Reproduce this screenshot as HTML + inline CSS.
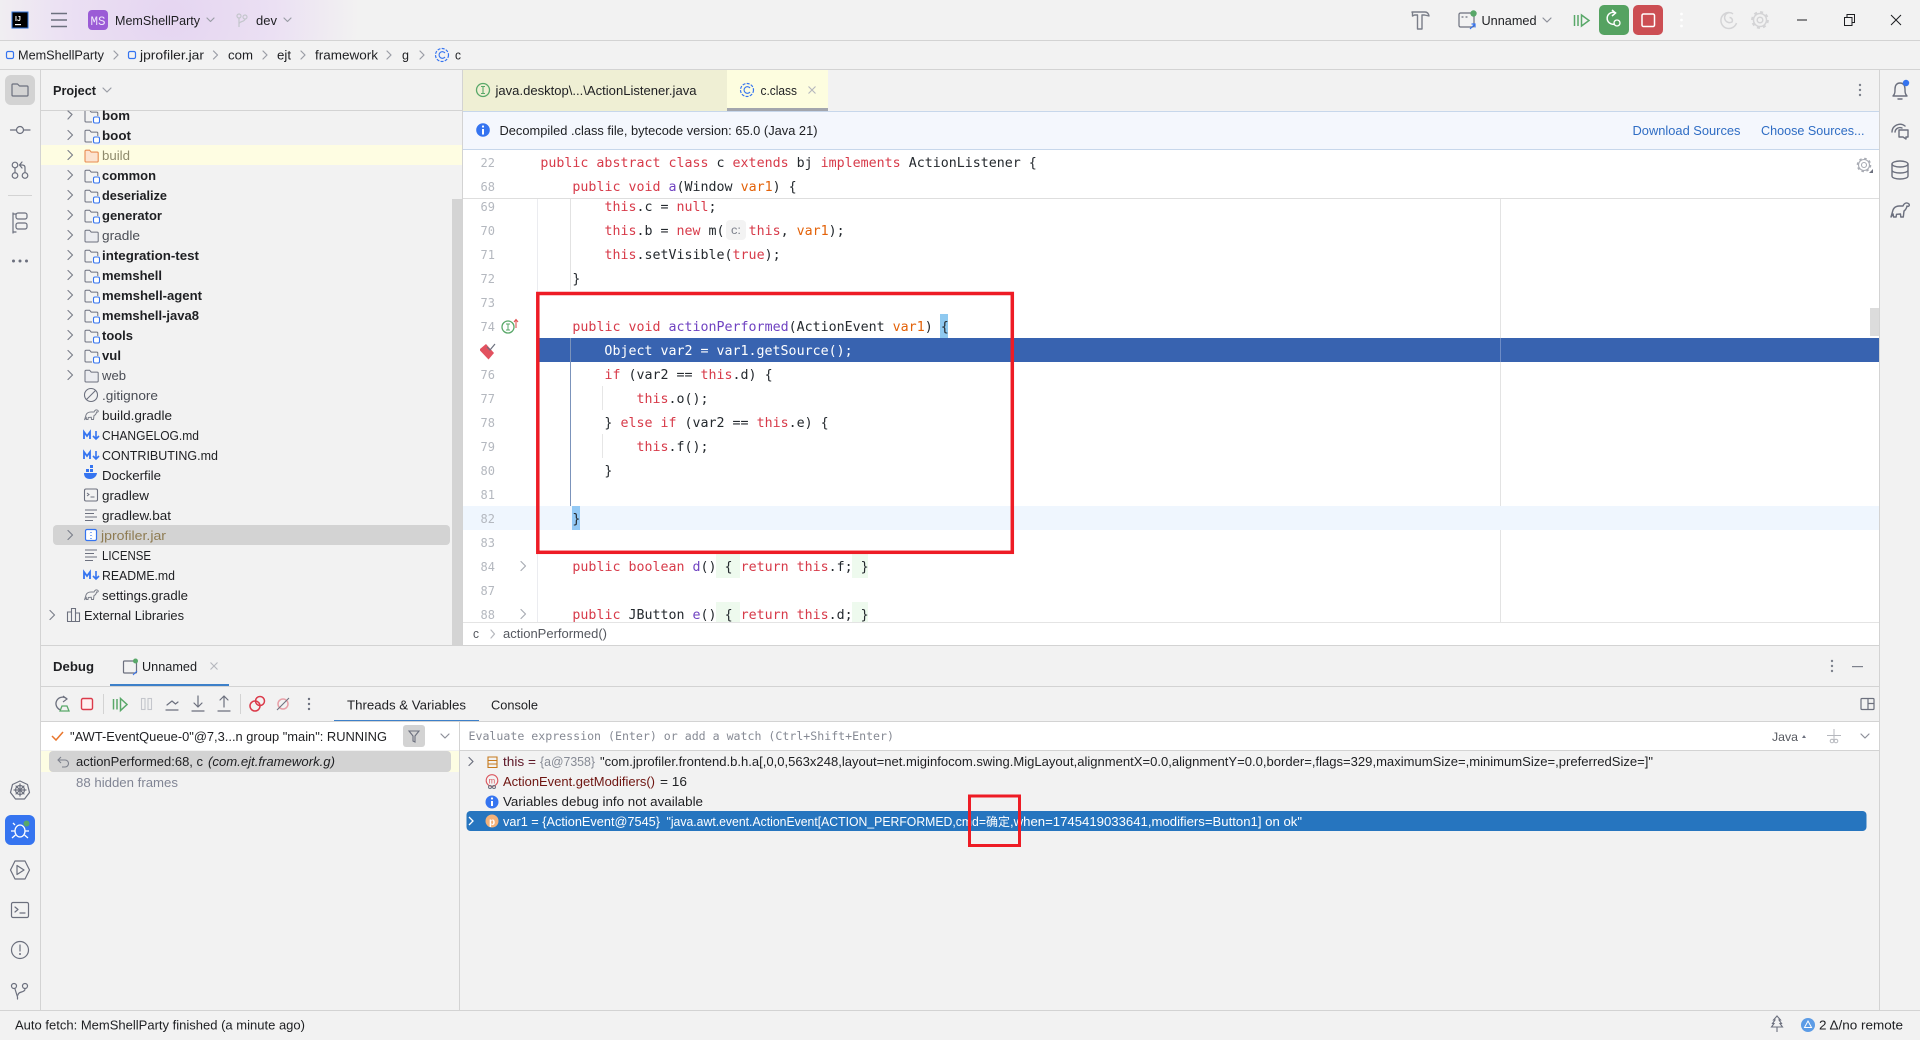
<!DOCTYPE html>
<html lang="en"><head><meta charset="utf-8"><title>MemShellParty</title>
<style>
html,body{margin:0;padding:0;width:1920px;height:1040px;overflow:hidden;background:#f2f2f2}
svg{display:block}
text{font-family:"Liberation Sans","Noto Sans CJK SC",sans-serif;font-size:13px;fill:#1e1f22;white-space:pre}
.b{font-weight:bold}
.m{font-family:"DejaVu Sans Mono","Liberation Mono",monospace;font-size:13.3px;fill:#24292e}
.n{font-family:"DejaVu Sans Mono","Liberation Mono",monospace;font-size:12px;fill:#b4b8bf}
.k{fill:#d73a49}.f{fill:#6f42c1}.p{fill:#e36209}
.i{fill:none;stroke:#6c707e;stroke-width:1.2;stroke-linecap:round;stroke-linejoin:round}
.c{fill:none;stroke:#7d818c;stroke-width:1.2;stroke-linecap:round;stroke-linejoin:round}
.w{fill:#fff}
</style></head><body>
<svg width="1920" height="1040" viewBox="0 0 1920 1040" xmlns="http://www.w3.org/2000/svg">
<defs>
<radialGradient id="g1" gradientUnits="userSpaceOnUse" cx="170" cy="15" r="190">
<stop offset="0" stop-color="#e5d5f1"/><stop offset=".55" stop-color="#ebe0f3"/><stop offset="1" stop-color="#f2f2f2"/></radialGradient>
<symbol id="mod" viewBox="0 0 16 16" width="16" height="16"><path d="M1 13V3.200a1 1 0 0 1 1-1h3.600l1.600 1.900h5.600a1 1 0 0 1 1 1V8M8 14H2a1 1 0 0 1-1-1" fill="none" stroke="#6c707e" stroke-width="1"/><rect x="9.500" y="9" width="6" height="6" rx="1.500" fill="#fff" stroke="#3574f0" stroke-width="1.100"/></symbol>
<symbol id="fol" viewBox="0 0 16 16" width="16" height="16"><path d="M1 13V3.200a1 1 0 0 1 1-1h3.600l1.600 1.900h6a1 1 0 0 1 1 1V13a1 1 0 0 1-1 1H2a1 1 0 0 1-1-1z" fill="#ebecf0" stroke="#6c707e" stroke-width="1"/></symbol>
<symbol id="md" viewBox="0 0 17 16" width="17" height="16"><path d="M1 12V5l3 4 3-4v7" fill="none" stroke="#3574f0" stroke-width="1.800"/><path d="M13 4v7.500M10 9l3 3 3-3" fill="none" stroke="#3574f0" stroke-width="1.600"/></symbol>
<symbol id="gr" viewBox="0 0 17 16" width="17" height="16"><path d="M1.500 13l1.500-5c1-2.500 3-3 5-3h3c.8-2 2.500-2.800 4-1.500.6 1-.2 2-1.400 1.500-.3 1.500-1.200 3-2.600 3.600l-.5 3.900h-2l-.2-2.200-3 .2-.3 2H3.500l-.2-1.800z" fill="none" stroke="#7b7f8a" stroke-width="1"/></symbol>
<symbol id="txt" viewBox="0 0 16 16" width="16" height="16"><path d="M2 3h12M2 6.500h9M2 10h12M2 13.500h8" stroke="#6c707e" stroke-width="1.100" fill="none"/></symbol>
</defs>

<!-- base -->
<rect width="1920" height="1040" fill="#f2f2f2"/>
<rect width="480" height="40" fill="url(#g1)"/>
<rect y="40" width="1920" height="1" fill="#d3d3d3"/>
<rect y="69" width="1920" height="1" fill="#d3d3d3"/>

<!-- title bar -->
<rect x="12" y="12" width="16" height="16" fill="#000" stroke="#2b6fd6" stroke-width="1"/>
<text x="15" y="21" style="font-size:7px;font-weight:bold;fill:#fff">IJ</text><rect x="15" y="24" width="6" height="1.200" fill="#fff"/>
<path d="M51 13.500h16M51 20h16M51 26.500h16" stroke="#6c707e" stroke-width="1.400"/>
<rect x="88" y="10" width="20" height="20" rx="4" fill="#9b5bd6"/>
<text x="90.500" y="25" textLength="15" lengthAdjust="spacingAndGlyphs" style="fill:#f0e6fa;font-size:12.500px;font-family:'Liberation Mono',monospace">MS</text>
<text x="115" y="25" textLength="85" lengthAdjust="spacingAndGlyphs">MemShellParty</text>
<path d="M207 18l3.500 3.500 3.500-3.500" class="c" style="stroke:#9a9da6"/>
<g fill="none" stroke="#c4c6cc" stroke-width="1.200"><circle cx="239" cy="16" r="2"/><circle cx="245" cy="17" r="2"/><path d="M239 18v9M245 19c0 3-6 2-6 5"/></g>
<text x="256" y="25" textLength="21" lengthAdjust="spacingAndGlyphs">dev</text>
<path d="M284 18l3.500 3.500 3.500-3.500" class="c" style="stroke:#9a9da6"/>

<path d="M1412 12h13c2 0 3.500 1.500 4 4l-4.500-1h-2.500v14h-4.500V15h-3l-2 1v-3z" fill="none" stroke="#7a7e89" stroke-width="1.400" stroke-linejoin="round"/>
<g class="i"><rect x="1459" y="13" width="15" height="14" rx="1.500"/><path d="M1462 17h1M1466 17h1"/></g><circle cx="1473.500" cy="13.500" r="3.200" fill="#59a869"/><path d="M1470 29l5-5M1471.500 24h3.500v3.500" fill="none" stroke="#3574f0" stroke-width="1.200"/>
<text x="1481.500" y="25" textLength="55" lengthAdjust="spacingAndGlyphs">Unnamed</text>
<path d="M1543 18l4 4 4-4" class="c" style="stroke:#8c8f99"/>
<path d="M1574.500 15v11M1578 15v11M1581.500 15l7.500 5.500-7.500 5.500z" fill="none" stroke="#59a869" stroke-width="1.500"/>
<rect x="1599" y="5" width="30" height="30" rx="5" fill="#55a261"/>
<path d="M1616 13a6 6 0 1 0-1 11" fill="none" stroke="#fff" stroke-width="1.500"/><path d="M1612 10l3.500 3-3.500 3" fill="none" stroke="#fff" stroke-width="1.500"/><circle cx="1617" cy="23" r="3" fill="none" stroke="#fff" stroke-width="1.300"/>
<rect x="1633" y="5" width="30" height="30" rx="5" fill="#cc4e53"/><rect x="1642" y="14" width="12.500" height="12.500" rx="1.500" fill="none" stroke="#fff" stroke-width="1.500"/>
<g fill="#fff"><circle cx="1681.500" cy="14" r="1.400"/><circle cx="1681.500" cy="20" r="1.400"/><circle cx="1681.500" cy="26" r="1.400"/></g>
<g fill="none" stroke="#d4d4d6" stroke-width="1.500"><path d="M1729 12.500a8 8 0 1 0 7.500 10.500M1733 14a5 5 0 1 0-1 8 3 3 0 0 0-2.500-4.500"/><circle cx="1760" cy="20" r="2.800"/><circle cx="1760" cy="20" r="6.500"/><circle cx="1760" cy="20" r="7.800" stroke-width="2.200" stroke-dasharray="3 3.100"/></g>
<path d="M1797 20h10" stroke="#1e1f22" stroke-width="1"/>
<path d="M1844.500 17.500h7.500v8h-7.500zM1847 17v-2.500h7.500v8h-2.500" fill="none" stroke="#1e1f22" stroke-width="1"/>
<path d="M1891 15l10 10M1901 15l-10 10" stroke="#1e1f22" stroke-width="1"/>

<!-- breadcrumb -->
<rect x="6.500" y="51.500" width="7" height="7" rx="1.500" fill="none" stroke="#3574f0" stroke-width="1.200"/>
<text x="18" y="59.500" textLength="86" lengthAdjust="spacingAndGlyphs">MemShellParty</text>
<path d="M114 51l4 4-4 4M213.500 51l4 4-4 4M263 51l4 4-4 4M301 51l4 4-4 4M387 51l4 4-4 4M420 51l4 4-4 4" class="c" style="stroke:#9a9da6"/>
<rect x="128.500" y="51.500" width="7" height="7" rx="1.500" fill="none" stroke="#3574f0" stroke-width="1.200"/>
<text x="140" y="59.500" textLength="64" lengthAdjust="spacingAndGlyphs">jprofiler.jar</text>
<text x="228" y="59.500" textLength="25" lengthAdjust="spacingAndGlyphs">com</text>
<text x="277" y="59.500" textLength="14" lengthAdjust="spacingAndGlyphs">ejt</text>
<text x="315" y="59.500" textLength="63" lengthAdjust="spacingAndGlyphs">framework</text>
<text x="402" y="59.500" textLength="7" lengthAdjust="spacingAndGlyphs">g</text>
<circle cx="442" cy="55" r="6.500" fill="none" stroke="#3574f0" stroke-width="1.200" stroke-dasharray="3 1.300"/><path d="M445 53a3.300 3.300 0 1 0 0 4" fill="none" stroke="#3574f0" stroke-width="1.100"/>
<text x="455" y="59.500" textLength="6" lengthAdjust="spacingAndGlyphs">c</text>

<!-- left strip -->
<rect x="40" y="70" width="1" height="940" fill="#d3d3d3"/>
<rect x="5" y="75" width="30" height="30" rx="6" fill="#d3d3d3"/>
<path d="M12 95V85a1 1 0 0 1 1-1h4.500l2 2H27a1 1 0 0 1 1 1v8a1 1 0 0 1-1 1H13a1 1 0 0 1-1-1z" class="i"/>
<g class="i"><circle cx="20" cy="130" r="3.500"/><path d="M10.500 130h6M23.500 130h6.500"/>
<circle cx="15" cy="165" r="2.800"/><circle cx="15" cy="175.500" r="2.800"/><path d="M15 168v5"/><circle cx="25" cy="175.500" r="2.800"/><path d="M25 172.500v-5c0-1.500-1-2.500-3-2.500h-2M22 162l-2.500 3 2.500 3"/>
<path d="M13 213v20M13 214h3M13 232h3"/><rect x="16" y="213" width="11" height="6" rx="2"/><rect x="16" y="223" width="11" height="6" rx="2"/></g>
<rect x="8" y="195" width="24" height="1" fill="#d3d3d3"/>
<g fill="#6c707e"><circle cx="13.500" cy="261" r="1.500"/><circle cx="20" cy="261" r="1.500"/><circle cx="26.500" cy="261" r="1.500"/></g>
<g class="i"><path d="M20 781l7.500 3.500 2 8-5 6.500h-9l-5-6.500 2-8z"/><circle cx="20" cy="790" r="4.500"/><path d="M20 784v12M14 790h12M16 786l8 8M24 786l-8 8"/></g>
<rect x="5" y="815" width="30" height="30" rx="6" fill="#3574f0"/>
<g fill="none" stroke="#fff" stroke-width="1.300"><ellipse cx="20" cy="831" rx="5" ry="6"/><path d="M15 825l-2-2M25 825l2-2M11 831h4M25 831h4M12 838l3.500-3M28 838l-3.500-3"/></g><circle cx="26.500" cy="823.500" r="3" fill="#59a869"/>
<g class="i"><path d="M15 861h10l4.500 9-4.500 9H15l-4.500-9z"/><path d="M17 865.500l7 4.500-7 4.500z"/><rect x="11.500" y="902.500" width="17" height="15" rx="1.500"/><path d="M15 907l3 2.500-3 2.500M20 913h5"/><circle cx="20" cy="950" r="8.500"/><path d="M20 945v6"/><circle cx="14" cy="986" r="2.500"/><circle cx="25" cy="986" r="2.500"/><path d="M15 989l2.500 8v2M25 989c0 4-7 2-7 6"/></g>
<circle cx="20" cy="954" r="1" fill="#6c707e"/>

<!-- project panel -->
<text x="53" y="95" class="b" textLength="43" lengthAdjust="spacingAndGlyphs">Project</text>
<path d="M103 88l4 4 4-4" class="c" style="stroke:#9a9da6"/>
<rect x="41" y="110" width="422" height="1" fill="#d3d3d3"/>
<rect x="452" y="199" width="10" height="446" fill="#d4d4d4"/>
<rect x="462" y="70" width="1" height="575" fill="#d3d3d3"/>
<rect x="41" y="145" width="421" height="20" fill="#fefde2"/>
<rect x="53" y="525" width="397" height="20" rx="4" fill="#d3d3d3"/>
<g class="c">
<path d="M68 111l4 3.500-4 4.500M68 130.500l4.500 4.500-4.500 4.500M68 150.500l4.500 4.500-4.500 4.500M68 170.500l4.500 4.500-4.500 4.500M68 190.500l4.500 4.500-4.500 4.500M68 210.500l4.500 4.500-4.500 4.500M68 230.500l4.500 4.500-4.500 4.500M68 250.500l4.500 4.500-4.500 4.500M68 270.500l4.500 4.500-4.500 4.500M68 290.500l4.500 4.500-4.500 4.500M68 310.500l4.500 4.500-4.500 4.500M68 330.500l4.500 4.500-4.500 4.500M68 350.500l4.500 4.500-4.500 4.500M68 370.500l4.500 4.500-4.500 4.500M68 530.500l4.500 4.500-4.500 4.500M50 610.500l4.500 4.500-4.500 4.500"/></g>
<svg x="84" y="111" width="16" height="13" viewBox="0 3 16 13"><use href="#mod"/></svg>
<use href="#mod" x="84" y="128"/>
<svg x="84" y="148" width="16" height="16"><path d="M1 13V3.200a1 1 0 0 1 1-1h3.600l1.600 1.900h6a1 1 0 0 1 1 1V13a1 1 0 0 1-1 1H2a1 1 0 0 1-1-1z" fill="#fce3d0" stroke="#e88c52" stroke-width="1.100"/></svg>
<use href="#mod" x="84" y="168"/><use href="#mod" x="84" y="188"/><use href="#mod" x="84" y="208"/>
<use href="#fol" x="84" y="228"/>
<use href="#mod" x="84" y="248"/><use href="#mod" x="84" y="268"/><use href="#mod" x="84" y="288"/><use href="#mod" x="84" y="308"/><use href="#mod" x="84" y="328"/><use href="#mod" x="84" y="348"/>
<use href="#fol" x="84" y="368"/>
<g fill="none" stroke="#6c707e" stroke-width="1.100"><circle cx="91" cy="395" r="6.500"/><path d="M86.500 399.500l9-9"/></g>
<use href="#gr" x="83" y="407"/>
<use href="#md" x="83" y="427"/><use href="#md" x="83" y="447"/>
<path d="M84 473h13c-.3 3-3 6-7 6s-6-2-6-6z" fill="#3574f0"/><rect x="86" y="469" width="3" height="3" fill="#3574f0"/><rect x="90" y="469" width="3" height="3" fill="#3574f0"/><rect x="90" y="465" width="3" height="3" fill="#3574f0"/>
<rect x="84.500" y="489" width="13" height="12" rx="1.500" fill="none" stroke="#6c707e" stroke-width="1.100"/><path d="M87 493l2 1.500-2 1.500M90.500 497h4" stroke="#6c707e" fill="none"/>
<use href="#txt" x="83" y="507"/>
<rect x="85.500" y="529.500" width="11" height="11" rx="1.500" fill="#fff" stroke="#3574f0" stroke-width="1.200"/><path d="M91 532v1M91 535v1M91 538v1M89.500 533.500h.1M92.500 536.500h.1" stroke="#3574f0" stroke-width="1.200"/>
<use href="#txt" x="83" y="547"/>
<use href="#md" x="83" y="567"/>
<use href="#gr" x="83" y="587"/>
<path d="M67.500 621v-9h4v9M71.500 621v-12.500h4V621M75.500 621v-8h4v8M67 621.500h13" fill="none" stroke="#6c707e" stroke-width="1.100"/>

<g>
<text x="102" y="120" class="b" textLength="28" lengthAdjust="spacingAndGlyphs">bom</text>
<text x="102" y="140" class="b" textLength="29" lengthAdjust="spacingAndGlyphs">boot</text>
<text x="102" y="160" textLength="28" lengthAdjust="spacingAndGlyphs" style="fill:#8e8a6c">build</text>
<text x="102" y="180" class="b" textLength="54" lengthAdjust="spacingAndGlyphs">common</text>
<text x="102" y="200" class="b" textLength="65" lengthAdjust="spacingAndGlyphs">deserialize</text>
<text x="102" y="220" class="b" textLength="60" lengthAdjust="spacingAndGlyphs">generator</text>
<text x="102" y="240" textLength="38" lengthAdjust="spacingAndGlyphs" style="fill:#4a4d55">gradle</text>
<text x="102" y="260" class="b" textLength="97" lengthAdjust="spacingAndGlyphs">integration-test</text>
<text x="102" y="280" class="b" textLength="60" lengthAdjust="spacingAndGlyphs">memshell</text>
<text x="102" y="300" class="b" textLength="100" lengthAdjust="spacingAndGlyphs">memshell-agent</text>
<text x="102" y="320" class="b" textLength="97" lengthAdjust="spacingAndGlyphs">memshell-java8</text>
<text x="102" y="340" class="b" textLength="31" lengthAdjust="spacingAndGlyphs">tools</text>
<text x="102" y="360" class="b" textLength="19" lengthAdjust="spacingAndGlyphs">vul</text>
<text x="102" y="380" textLength="24" lengthAdjust="spacingAndGlyphs" style="fill:#4a4d55">web</text>
<text x="102" y="400" textLength="56" lengthAdjust="spacingAndGlyphs" style="fill:#4a4d55">.gitignore</text>
<text x="102" y="420" textLength="70" lengthAdjust="spacingAndGlyphs">build.gradle</text>
<text x="102" y="440" textLength="97" lengthAdjust="spacingAndGlyphs">CHANGELOG.md</text>
<text x="102" y="460" textLength="116" lengthAdjust="spacingAndGlyphs">CONTRIBUTING.md</text>
<text x="102" y="480" textLength="59" lengthAdjust="spacingAndGlyphs">Dockerfile</text>
<text x="102" y="500" textLength="47" lengthAdjust="spacingAndGlyphs">gradlew</text>
<text x="102" y="520" textLength="69" lengthAdjust="spacingAndGlyphs">gradlew.bat</text>
<text x="101" y="540" textLength="65" lengthAdjust="spacingAndGlyphs" style="fill:#8e7b52">jprofiler.jar</text>
<text x="102" y="560" textLength="49" lengthAdjust="spacingAndGlyphs">LICENSE</text>
<text x="102" y="580" textLength="73" lengthAdjust="spacingAndGlyphs">README.md</text>
<text x="102" y="600" textLength="86" lengthAdjust="spacingAndGlyphs">settings.gradle</text>
<text x="84" y="620" textLength="100" lengthAdjust="spacingAndGlyphs">External Libraries</text>
</g>

<!-- editor tabs -->
<rect x="463" y="70" width="264" height="41" fill="#efefd4"/>
<rect x="727" y="70" width="101" height="38" fill="#fdfddf"/>
<rect x="727" y="108" width="101" height="3" fill="#a3a6ad"/>
<circle cx="483" cy="90" r="6.500" fill="none" stroke="#59a869" stroke-width="1.300"/><path d="M481 86.500h4M483 86.500v7M481 93.500h4" stroke="#59a869" stroke-width="1.100"/>
<text x="495.500" y="95" textLength="201" lengthAdjust="spacingAndGlyphs">java.desktop\...\ActionListener.java</text>
<circle cx="747" cy="90" r="6.500" fill="none" stroke="#3574f0" stroke-width="1.200" stroke-dasharray="3 1.300"/><path d="M750 88a3.300 3.300 0 1 0 0 4" fill="none" stroke="#3574f0" stroke-width="1.100"/>
<text x="760.500" y="95" textLength="36.500" lengthAdjust="spacingAndGlyphs">c.class</text>
<path d="M808.500 86.500l7 7M815.500 86.500l-7 7" stroke="#b5b7bd" stroke-width="1.100"/>
<g fill="#7d818c"><circle cx="1860" cy="85" r="1.200"/><circle cx="1860" cy="90" r="1.200"/><circle cx="1860" cy="95" r="1.200"/></g>

<!-- banner -->
<rect x="463" y="111" width="1416" height="39" fill="#f4f7fd"/>
<rect x="463" y="111" width="1416" height="1" fill="#c7d7eb"/>
<rect x="463" y="149" width="1416" height="1" fill="#c7d7eb"/>
<circle cx="483" cy="130" r="6.800" fill="#3574f0"/><rect x="482" y="129" width="2" height="5.500" fill="#fff"/><circle cx="483" cy="126.500" r="1.100" fill="#fff"/>
<text x="499.500" y="135" textLength="318" lengthAdjust="spacingAndGlyphs">Decompiled .class file, bytecode version: 65.0 (Java 21)</text>
<text x="1632.500" y="135" textLength="108" lengthAdjust="spacingAndGlyphs" style="fill:#2f6dc4">Download Sources</text>
<text x="1761" y="135" textLength="103.500" lengthAdjust="spacingAndGlyphs" style="fill:#2f6dc4">Choose Sources...</text>

<!-- editor body -->
<rect x="463" y="150" width="1416" height="472" fill="#fff"/>
<rect x="463" y="198" width="1416" height="1" fill="#dedede"/>
<rect x="537" y="199" width="1" height="423" fill="#ebecf0"/>
<rect x="1500" y="199" width="1" height="423" fill="#e3e3e3"/>
<rect x="463" y="506" width="1416" height="24" fill="#eff6fe"/>
<rect x="539" y="338" width="1340" height="24" fill="#3863b0"/>
<rect x="1500" y="338" width="1" height="24" fill="#6e8cc6"/>
<rect x="1870" y="308" width="9" height="28" fill="#dcdcdc"/>
<rect x="570" y="199" width="1" height="91" fill="#e2e2e2"/>
<rect x="570" y="338" width="1" height="168" fill="#7b93bb"/>
<rect x="602" y="386" width="1" height="24" fill="#e6e6e6"/><rect x="602" y="434" width="1" height="24" fill="#e6e6e6"/>

<!-- line numbers -->
<g class="n">
<text class="n" x="480.500" y="167">22</text><text class="n" x="480.500" y="191">68</text>
<text class="n" x="480.500" y="211">69</text><text class="n" x="480.500" y="235">70</text><text class="n" x="480.500" y="259">71</text><text class="n" x="480.500" y="283">72</text><text class="n" x="480.500" y="307">73</text><text class="n" x="480.500" y="331">74</text><text class="n" x="480.500" y="379">76</text><text class="n" x="480.500" y="403">77</text><text class="n" x="480.500" y="427">78</text><text class="n" x="480.500" y="451">79</text><text class="n" x="480.500" y="475">80</text><text class="n" x="480.500" y="499">81</text><text class="n" x="480.500" y="523">82</text><text class="n" x="480.500" y="547">83</text><text class="n" x="480.500" y="571">84</text><text class="n" x="480.500" y="595">87</text><text class="n" x="480.500" y="619">88</text>
</g>
<!-- breakpoint + gutter icons -->
<path d="M480 349l6-5 8 9-5.500 6.500-8.500-9z" fill="#e2515f"/><path d="M487 347l3 3 5-6" fill="none" stroke="#6c707e" stroke-width="1.200"/>
<circle cx="508" cy="327" r="6" fill="none" stroke="#59a869" stroke-width="1.300"/><path d="M506 324h4M508 324v6M506 330h4" stroke="#59a869"/><path d="M516 328v-8M514 322l2-2.500 2 2.500" fill="none" stroke="#e05555" stroke-width="1.100"/>
<path d="M521 561.500l4.500 4.500-4.500 4.500M521 609.500l4.500 4.500-4.500 4.500" class="c" style="stroke:#a9acb4"/>

<!-- highlights -->
<rect x="940" y="314" width="8" height="24" fill="#8fc9f0"/>
<rect x="572" y="506" width="8" height="24" fill="#93c9f5"/>
<rect x="716" y="554" width="24" height="24" fill="#eefaee"/><rect x="852" y="554" width="16" height="24" fill="#eefaee"/>
<rect x="716" y="602" width="24" height="20" fill="#eefaee"/><rect x="852" y="602" width="16" height="20" fill="#eefaee"/>

<!-- code -->
<text class="m" x="540.400" y="167"><tspan class="k">public abstract class</tspan> c <tspan class="k">extends</tspan> bj <tspan class="k">implements</tspan> ActionListener {</text>
<text class="m" x="540.400" y="191">    <tspan class="k">public void</tspan> <tspan class="f">a</tspan>(Window <tspan class="p">var1</tspan>) {</text>
<text class="m" x="540.400" y="211">        <tspan class="k">this</tspan>.c = <tspan class="k">null</tspan>;</text>
<text class="m" x="540.400" y="235">        <tspan class="k">this</tspan>.b = <tspan class="k">new</tspan> m(</text>
<rect x="726" y="220" width="20" height="20" rx="4" fill="#f3f3f3"/>
<text x="731" y="234" textLength="10" lengthAdjust="spacingAndGlyphs" style="font-size:12px;fill:#7d818c">c:</text>
<text class="m" x="748.600" y="235"><tspan class="k">this</tspan>, <tspan class="p">var1</tspan>);</text>
<text class="m" x="540.400" y="259">        <tspan class="k">this</tspan>.setVisible(<tspan class="k">true</tspan>);</text>
<text class="m" x="540.400" y="283">    }</text>
<text class="m" x="540.400" y="331">    <tspan class="k">public void</tspan> <tspan class="f">actionPerformed</tspan>(ActionEvent <tspan class="p">var1</tspan>) {</text>
<text class="m" x="540.400" y="355" style="fill:#fff">        Object var2 = var1.getSource();</text>
<text class="m" x="540.400" y="379">        <tspan class="k">if</tspan> (var2 == <tspan class="k">this</tspan>.d) {</text>
<text class="m" x="540.400" y="403">            <tspan class="k">this</tspan>.o();</text>
<text class="m" x="540.400" y="427">        } <tspan class="k">else if</tspan> (var2 == <tspan class="k">this</tspan>.e) {</text>
<text class="m" x="540.400" y="451">            <tspan class="k">this</tspan>.f();</text>
<text class="m" x="540.400" y="475">        }</text>
<text class="m" x="540.400" y="523">    }</text>
<text class="m" x="540.400" y="571">    <tspan class="k">public boolean</tspan> <tspan class="f">d</tspan>() { <tspan class="k">return this</tspan>.f; }</text>
<text class="m" x="540.400" y="619">    <tspan class="k">public</tspan> JButton <tspan class="f">e</tspan>() { <tspan class="k">return this</tspan>.d; }</text>

<!-- editor settings gear -->
<g fill="none" stroke="#a9acb4" stroke-width="1.100"><circle cx="1864" cy="165" r="2.500"/><circle cx="1864" cy="165" r="5.500"/><circle cx="1864" cy="165" r="6.500" stroke-width="1.600" stroke-dasharray="2.500 2.600"/></g><path d="M1873 169v4h-4z" fill="#6c707e"/>

<!-- editor bottom crumbs -->
<rect x="463" y="622" width="1416" height="23" fill="#fff"/>
<rect x="463" y="622" width="1416" height="1" fill="#e4e4e4"/>
<rect x="463" y="645" width="1416" height="1" fill="#d3d3d3"/>
<rect x="41" y="645" width="422" height="1" fill="#d3d3d3"/>
<text x="473" y="638" textLength="6" lengthAdjust="spacingAndGlyphs" style="fill:#55585f">c</text>
<path d="M491 630l3.500 4-3.500 4" class="c" style="stroke:#b5b7bd"/>
<text x="503" y="638" textLength="104" lengthAdjust="spacingAndGlyphs" style="fill:#55585f">actionPerformed()</text>

<!-- right strip -->
<rect x="1879" y="70" width="1" height="940" fill="#d3d3d3"/>
<g class="i" style="stroke-width:1.400"><path d="M1893 96c2-2 2-4 2-7 0-4 2-6 5-6s5 2 5 6c0 3 0 5 2 7z"/><path d="M1898 99h4"/>
<path d="M1892 132a8 8 0 0 1 13-6M1895 132a5 5 0 0 1 7-4"/><path d="M1899 130h9v7h-2v2l-3-2h-4z"/>
<ellipse cx="1900" cy="164" rx="8" ry="3"/><path d="M1892 164v12c0 2 4 3 8 3s8-1 8-3v-12M1892 170c0 2 4 3 8 3s8-1 8-3"/>
<path d="M1891 217l2-7c1-3 4-4 6-4h4c1-3 4-4 6-2 1 2-1 3-2 2-.4 2-1.500 4-3 5l-.7 6h-2.500l-.3-3-4 .3-.4 2.700h-2.500l-.5-3-2 3z"/></g>
<circle cx="1906" cy="83" r="3.200" fill="#3574f0"/>

<!-- debug panel -->
<text x="53" y="671" class="b" textLength="41" lengthAdjust="spacingAndGlyphs">Debug</text>
<g class="i"><rect x="123.500" y="661" width="13" height="12" rx="1"/></g><circle cx="135.500" cy="661" r="2.500" fill="#59a869"/><path d="M133 675l4-4" stroke="#3574f0" fill="none"/>
<text x="142" y="671" textLength="55" lengthAdjust="spacingAndGlyphs">Unnamed</text>
<path d="M210.500 662.500l7 7M217.500 662.500l-7 7" stroke="#b5b7bd" stroke-width="1.100"/>
<rect x="110" y="684" width="119" height="2.500" fill="#3d80c9"/>
<rect x="41" y="686" width="1838" height="1" fill="#d3d3d3"/>
<g fill="#7d818c"><circle cx="1832" cy="661" r="1.200"/><circle cx="1832" cy="666" r="1.200"/><circle cx="1832" cy="671" r="1.200"/></g>
<rect x="1852" y="666" width="11" height="1.200" fill="#7d818c"/>

<!-- debug toolbar -->
<path d="M67 699a6.500 6.500 0 1 0-6 11" fill="none" stroke="#6c707e" stroke-width="1.300"/><path d="M63 696l4 3-4 3" fill="none" stroke="#6c707e" stroke-width="1.100"/><path d="M62 706h5l2 5h-9z" fill="none" stroke="#59a869" stroke-width="1.300"/>
<rect x="81.500" y="698.500" width="11" height="11" rx="1.500" fill="#fff0f0" stroke="#db3b4b" stroke-width="1.400"/>
<rect x="103" y="694" width="1" height="20" fill="#d3d3d3"/>
<path d="M113.500 699v10.500M117 699v10.500M120.500 698.500l6.500 6-6.500 6z" fill="none" stroke="#59a869" stroke-width="1.500"/>
<rect x="141.500" y="698.500" width="3.500" height="11" fill="none" stroke="#c4c6cc" stroke-width="1.100"/><rect x="148" y="698.500" width="3.500" height="11" fill="none" stroke="#c4c6cc" stroke-width="1.100"/>
<g class="i"><path d="M167 705l5-4 3.500 3 2.500-2M166 710h12"/><path d="M192 711h12M198 696v11M194 703l4 4 4-4"/><path d="M218 711h12M224 707v-11M220 700l4-4 4 4"/></g>
<rect x="240" y="694" width="1" height="20" fill="#d3d3d3"/>
<circle cx="255" cy="706" r="5" fill="none" stroke="#db3b4b" stroke-width="1.500"/><circle cx="260" cy="701" r="4.500" fill="none" stroke="#db3b4b" stroke-width="1.500"/>
<circle cx="283" cy="704" r="5" fill="none" stroke="#e8a0a8" stroke-width="1.500"/><path d="M277 710l12-12" stroke="#6c707e" stroke-width="1.100"/>
<g fill="#6c707e"><circle cx="309" cy="699" r="1.200"/><circle cx="309" cy="704" r="1.200"/><circle cx="309" cy="709" r="1.200"/></g>
<text x="347" y="709.500" textLength="119" lengthAdjust="spacingAndGlyphs">Threads &amp; Variables</text>
<rect x="334" y="720" width="145" height="2" fill="#3d80c9"/>
<text x="491" y="709.500" textLength="47" lengthAdjust="spacingAndGlyphs">Console</text>
<path d="M1862 698.500h11a1 1 0 0 1 1 1v9a1 1 0 0 1-1 1h-11a1 1 0 0 1-1-1v-9a1 1 0 0 1 1-1zM1868 699v10M1868 703.500h6" class="c" style="stroke:#6c707e"/>
<rect x="41" y="721" width="1838" height="1" fill="#d3d3d3"/>

<!-- thread row -->
<rect x="41" y="722" width="418" height="28" fill="#fff"/>
<path d="M52 736l4 4 7-8" fill="none" stroke="#e8762d" stroke-width="1.500"/>
<text x="70" y="741" textLength="317" lengthAdjust="spacingAndGlyphs">"AWT-EventQueue-0"@7,3...n group "main": RUNNING</text>
<rect x="403" y="725" width="22" height="22" rx="3" fill="#d3d3d3"/>
<path d="M409 731h10l-4 5v6l-2-1v-5z" fill="none" stroke="#6c707e" stroke-width="1.100"/>
<path d="M441 734l4 4 4-4" class="c" style="stroke:#8c8f99"/>
<rect x="459" y="722" width="1" height="288" fill="#d3d3d3"/>
<rect x="41" y="751" width="418" height="21" fill="#fdfde3"/>
<rect x="49" y="751" width="402" height="21" rx="4" fill="#d3d3d3"/>
<path d="M61 757l-3 3 3 3M58 760h7a3.500 3.500 0 0 1 0 7h-3" fill="none" stroke="#7d818c" stroke-width="1.100"/>
<text x="76" y="766" textLength="127" lengthAdjust="spacingAndGlyphs">actionPerformed:68, c</text>
<text x="208" y="766" textLength="127" lengthAdjust="spacingAndGlyphs" style="font-style:italic">(com.ejt.framework.g)</text>
<text x="76" y="787" textLength="102" lengthAdjust="spacingAndGlyphs" style="fill:#818594">88 hidden frames</text>

<!-- evaluate row -->
<rect x="460" y="722" width="1419" height="28" fill="#fff"/>
<rect x="460" y="750" width="1419" height="1" fill="#d3d3d3"/>
<text x="468.500" y="740" textLength="425.500" lengthAdjust="spacingAndGlyphs" style="font-family:'DejaVu Sans Mono',monospace;font-size:11.600px;fill:#868a94">Evaluate expression (Enter) or add a watch (Ctrl+Shift+Enter)</text>
<text x="1772" y="741" textLength="26" lengthAdjust="spacingAndGlyphs" style="font-size:12px;fill:#55585f">Java</text>
<path d="M1802 738h4l-2-3z" fill="#6c707e"/>
<path d="M1827 735.500h14M1834 729v13" stroke="#b5b7bd" fill="none"/><circle cx="1832" cy="741" r="1.800" fill="none" stroke="#b5b7bd"/><circle cx="1836" cy="741" r="1.800" fill="none" stroke="#b5b7bd"/>
<path d="M1861 734l4 4 4-4" class="c" style="stroke:#8c8f99"/>

<!-- variables -->
<rect x="466.500" y="811" width="1400" height="20" rx="4" fill="#2675bf"/>
<path d="M469 757.500l4 4-4 4" class="c" style="stroke:#6c707e"/>
<path d="M469 817l4 4-4 4" fill="none" stroke="#fff" stroke-width="1.300"/>
<path d="M488 757h9v3.500h-9zM488 760.500h9v3.500h-9zM488 764h9v3.500h-9z" fill="none" stroke="#c77a1e" stroke-width="1.100"/>
<circle cx="492" cy="780.500" r="5.800" fill="none" stroke="#db5860" stroke-width="1.100"/><text x="488.500" y="783.500" style="font-size:8px;fill:#db5860">m</text><circle cx="490" cy="787" r="1.500" fill="none" stroke="#6c707e"/><circle cx="494" cy="787" r="1.500" fill="none" stroke="#6c707e"/>
<circle cx="492" cy="802" r="6.500" fill="#3574f0"/><rect x="491" y="801" width="2" height="5" fill="#fff"/><circle cx="492" cy="798.500" r="1.100" fill="#fff"/>
<circle cx="492" cy="821" r="6.500" fill="#f4b27a"/><text x="489" y="825" style="font-size:10px;font-weight:bold;fill:#fff">p</text>
<text x="503" y="766" textLength="33" lengthAdjust="spacingAndGlyphs" style="fill:#5c1626">this =</text>
<text x="540" y="766" textLength="55" lengthAdjust="spacingAndGlyphs" style="fill:#868a94">{a@7358}</text>
<text x="600" y="766" textLength="1053" lengthAdjust="spacingAndGlyphs">"com.jprofiler.frontend.b.h.a[,0,0,563x248,layout=net.miginfocom.swing.MigLayout,alignmentX=0.0,alignmentY=0.0,border=,flags=329,maximumSize=,minimumSize=,preferredSize=]"</text>
<text x="503" y="786" textLength="152" lengthAdjust="spacingAndGlyphs" style="fill:#6e1410">ActionEvent.getModifiers()</text>
<text x="660" y="786" textLength="27" lengthAdjust="spacingAndGlyphs">= 16</text>
<text x="503" y="806" textLength="200" lengthAdjust="spacingAndGlyphs">Variables debug info not available</text>
<text x="503" y="826" textLength="157" lengthAdjust="spacingAndGlyphs" style="fill:#fff">var1 = {ActionEvent@7545}</text>
<text x="666.500" y="826" textLength="319.500" lengthAdjust="spacingAndGlyphs" style="fill:#fff">"java.awt.event.ActionEvent[ACTION_PERFORMED,cmd=</text>
<text x="986" y="826" textLength="24" lengthAdjust="spacingAndGlyphs" style="fill:#fff;font-family:'Noto Sans CJK SC',sans-serif;font-size:12px">确定</text>
<text x="1010" y="826" textLength="292" lengthAdjust="spacingAndGlyphs" style="fill:#fff">,when=1745419033641,modifiers=Button1] on ok"</text>

<!-- red annotations -->
<rect x="537.800" y="293.500" width="474.500" height="258.800" fill="none" stroke="#ee1c25" stroke-width="3.500"/>
<rect x="969.500" y="796" width="50" height="49.500" fill="none" stroke="#ee1c25" stroke-width="3"/>

<!-- status bar -->
<rect y="1010" width="1920" height="1" fill="#d3d3d3"/>
<text x="15" y="1029.500" textLength="290" lengthAdjust="spacingAndGlyphs">Auto fetch: MemShellParty finished (a minute ago)</text>
<path d="M1777 1016l-3.500 4h1.500l-2.500 3.500h1.500l-2.500 3.500h11l-2.500-3.500h1.500l-2.500-3.500h1.500zM1777 1027v5" fill="none" stroke="#6c707e" stroke-width="1.100"/>
<circle cx="1808" cy="1025" r="7" fill="#5c9ce6"/><path d="M1808 1021l3.500 6.500h-7z" fill="none" stroke="#fff" stroke-width="1"/>
<text x="1819" y="1029.500" textLength="84" lengthAdjust="spacingAndGlyphs">2 Δ/no remote</text>
</svg>
</body></html>
